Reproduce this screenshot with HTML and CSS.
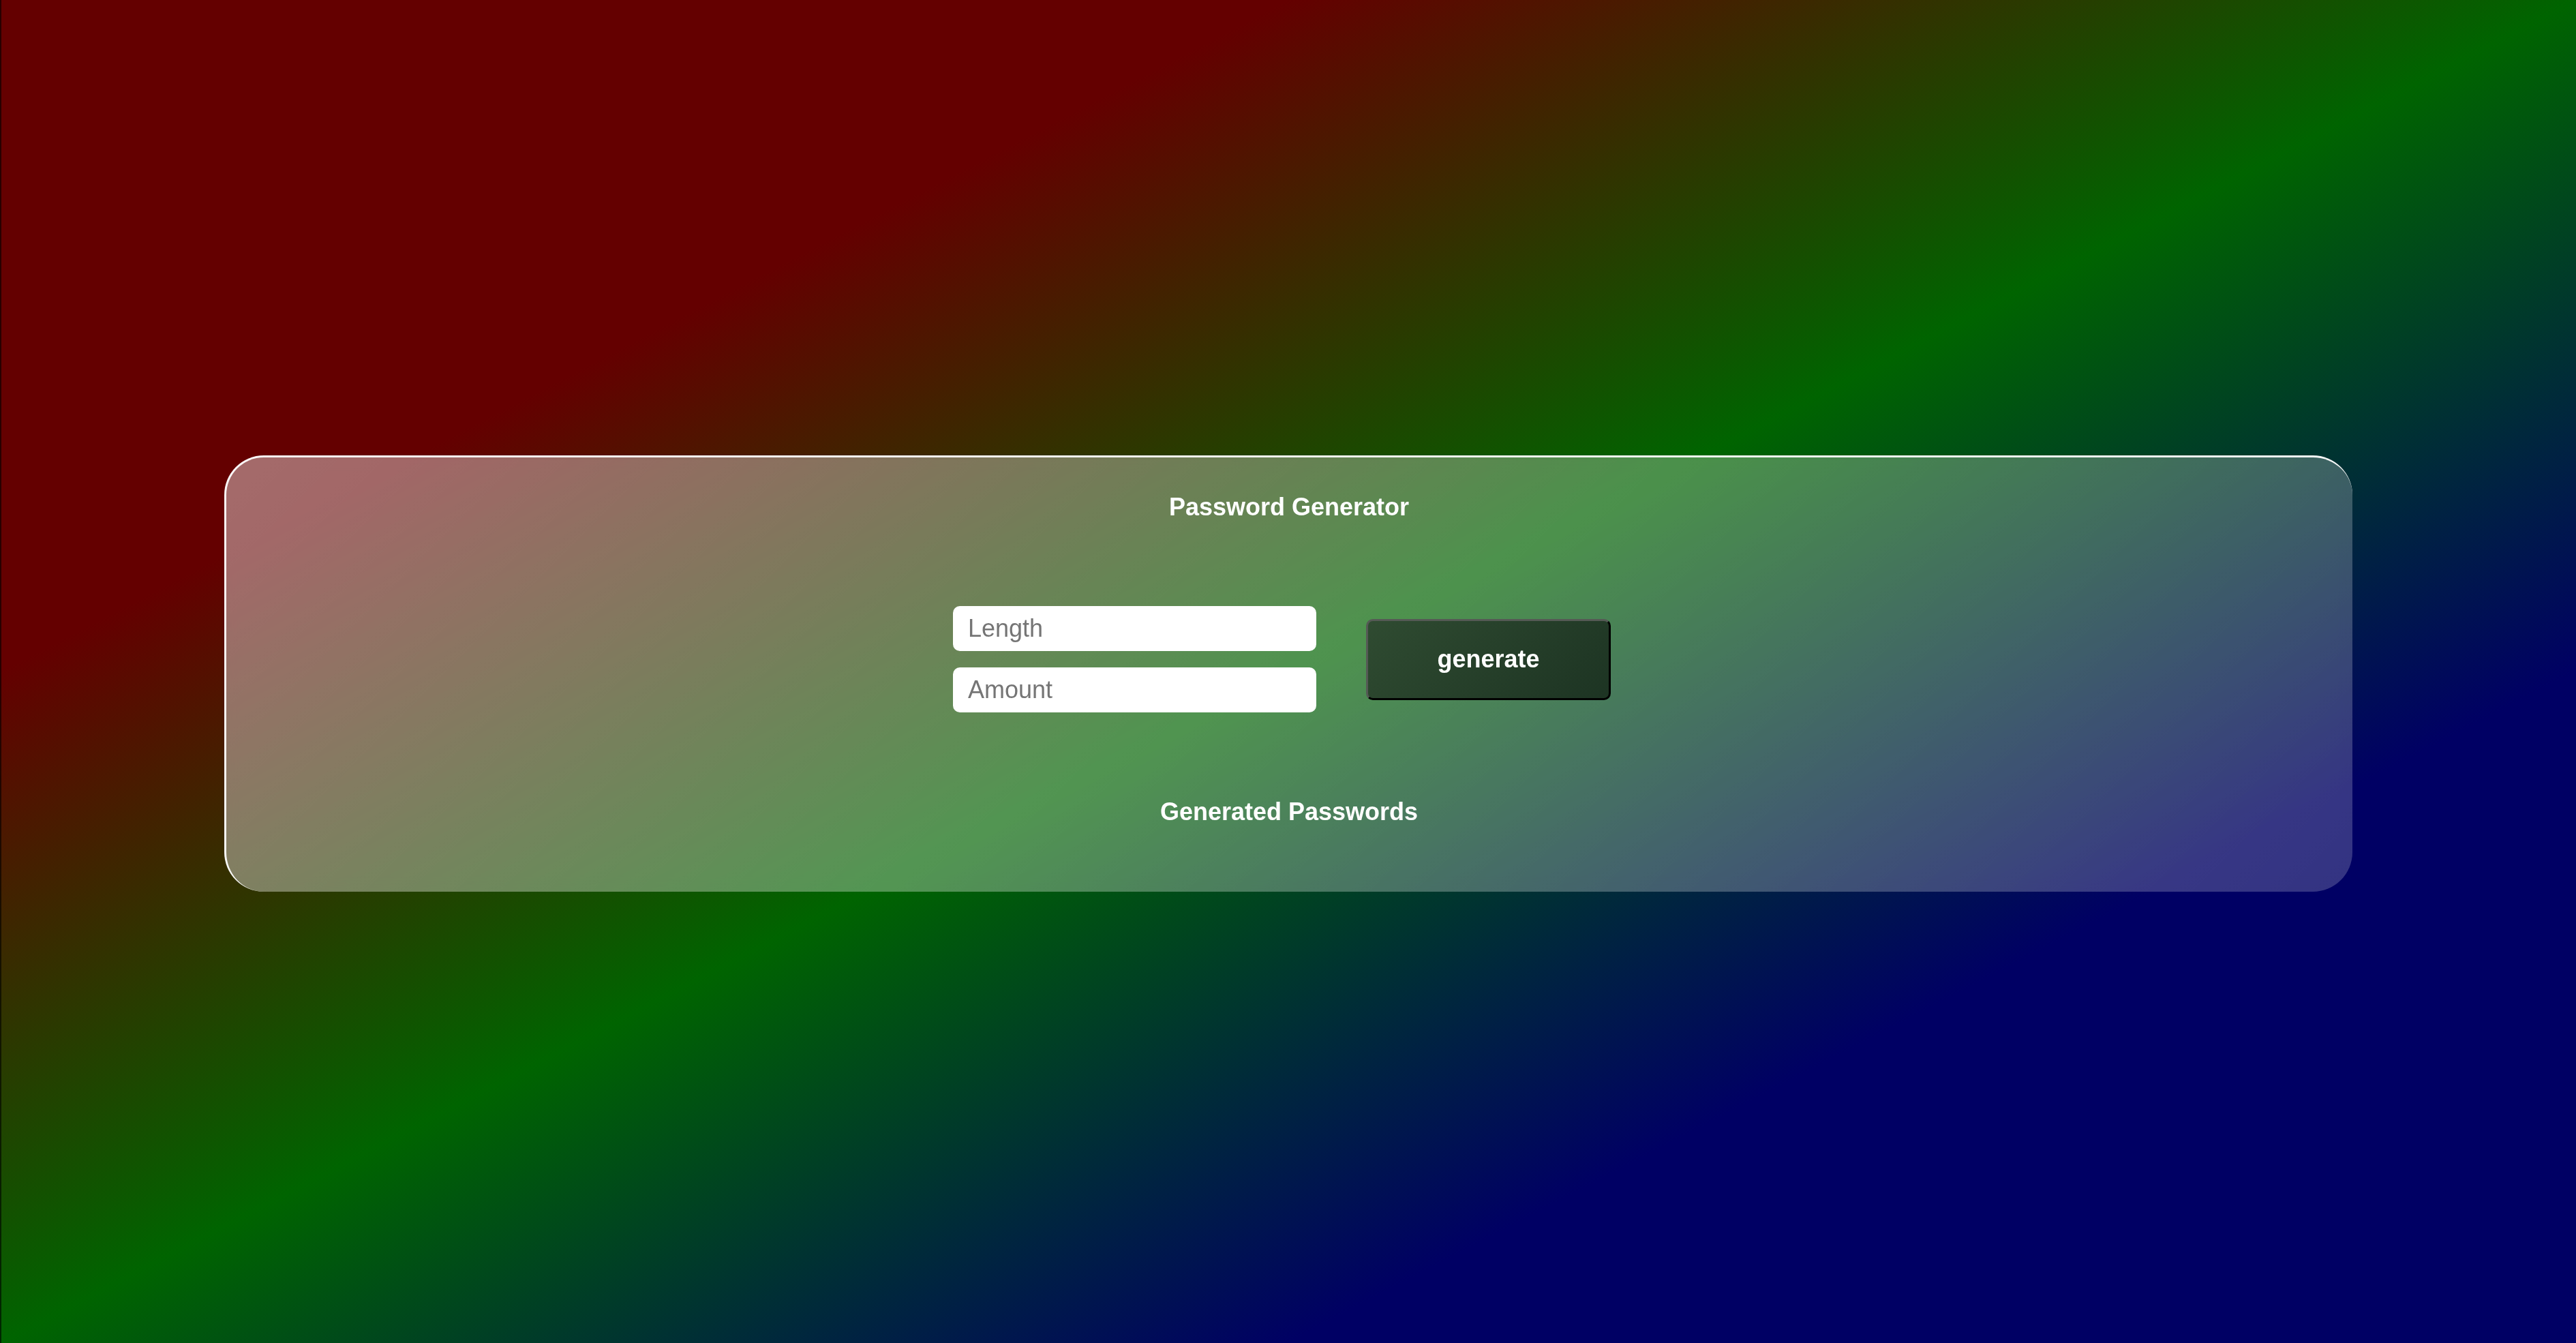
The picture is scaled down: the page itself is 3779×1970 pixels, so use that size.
FILE: index.html
```html
<!DOCTYPE html>
<html lang="en">
<head>
<meta charset="utf-8">
<title>Password Generator</title>
<link rel="stylesheet" href="styles.css">
</head>
<body>
  <main class="card">
    <h1 class="title">Password Generator</h1>
    <div class="controls">
      <div class="fields">
        <input class="field" type="number" placeholder="Length">
        <input class="field" type="number" placeholder="Amount">
      </div>
      <button class="generate" type="button">generate</button>
    </div>
    <h2 class="title results">Generated Passwords</h2>
  </main>
</body>
</html>
```

FILE: styles.css
```css
html, body {
  margin: 0;
  padding: 0;
}

body {
  box-sizing: border-box;
  height: 100vh;
  display: flex;
  align-items: center;
  justify-content: center;
  border-left: 2px solid rgba(0, 0, 0, 0.6);
  background: linear-gradient(to bottom right, rgb(100, 0, 0) 25%, rgb(0, 100, 0) 50%, rgb(0, 0, 100) 75%);
  font-family: "Liberation Sans", Arial, sans-serif;
  overflow: hidden;
}

.card {
  box-sizing: border-box;
  width: 3122px;
  margin-top: 6px;
  margin-left: -2px;
  padding: 52px 0 97px;
  border-top: 3px solid rgba(255, 255, 255, 0.95);
  border-left: 3px solid rgba(255, 255, 255, 0.95);
  border-radius: 58px;
  background: linear-gradient(135deg, rgba(255, 255, 255, 0.42), rgba(255, 255, 255, 0.2));
  backdrop-filter: blur(10px);
}

.title {
  margin: 0;
  color: #fff;
  font-size: 36px;
  line-height: 41px;
  font-weight: bold;
  text-align: center;
}

.controls {
  margin-top: 125px;
  display: flex;
  align-items: center;
  justify-content: center;
  gap: 73px;
  padding-right: 21px;
}

.fields {
  display: flex;
  flex-direction: column;
  gap: 24px;
}

.field {
  box-sizing: border-box;
  width: 533px;
  height: 66px;
  padding: 0 22px;
  border: none;
  border-radius: 10px;
  background: #fff;
  font-family: "Liberation Sans", Arial, sans-serif;
  font-size: 36px;
  color: #333;
  outline: none;
  -moz-appearance: textfield;
}

.field::-webkit-outer-spin-button,
.field::-webkit-inner-spin-button {
  -webkit-appearance: none;
  margin: 0;
}

.field::placeholder {
  color: #757575;
}

.generate {
  box-sizing: border-box;
  width: 359px;
  height: 119px;
  border-style: solid;
  border-width: 3px;
  border-color: #555a55 #000 #000 #555a55;
  border-radius: 10px;
  background: linear-gradient(135deg, #2f4b31, #1d3423);
  color: #fff;
  font-family: "Liberation Sans", Arial, sans-serif;
  font-size: 36px;
  font-weight: bold;
  cursor: pointer;
}

.results {
  margin-top: 125px;
}
```
